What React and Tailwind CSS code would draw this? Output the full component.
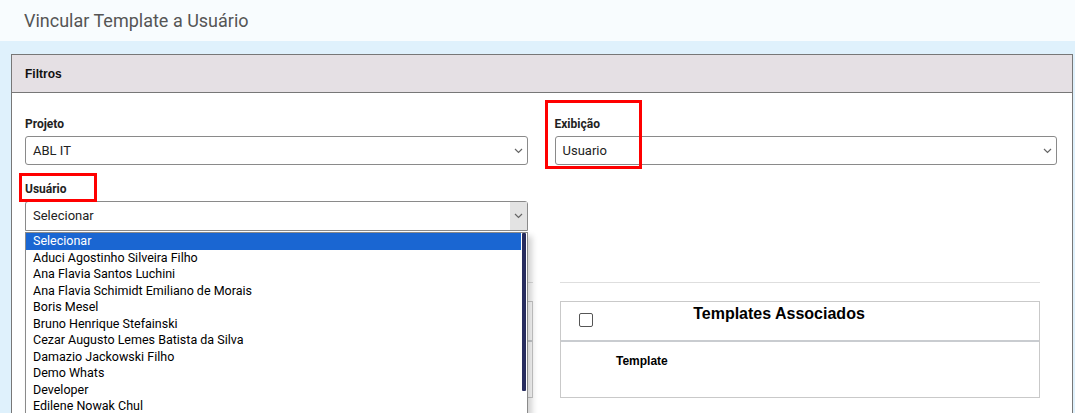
import React from 'react';

const users = [
  'Aduci Agostinho Silveira Filho',
  'Ana Flavia Santos Luchini',
  'Ana Flavia Schimidt Emiliano de Morais',
  'Boris Mesel',
  'Bruno Henrique Stefainski',
  'Cezar Augusto Lemes Batista da Silva',
  'Damazio Jackowski Filho',
  'Demo Whats',
  'Developer',
  'Edilene Nowak Chul',
  'Eduardo Martins',
];

const Chevron = () => (
  <svg width="9" height="6" viewBox="0 0 9 6" className="shrink-0">
    <path d="M1 1l3.5 3.5L8 1" fill="none" stroke="#666" strokeWidth="1.2" />
  </svg>
);

const Select = ({ value, open }) => (
  <div
    className={`flex h-[29px] items-center rounded-[3px] border border-[#8a8a8a] bg-white text-[13px] text-[#222] ${open ? 'h-[30px] rounded-b-none' : ''}`}
  >
    <span className="flex-1 pl-[7px]">{value}</span>
    <span className={`flex h-full w-[17px] items-center justify-center ${open ? 'bg-[#e3e3e3]' : ''}`}>
      <Chevron />
    </span>
  </div>
);

const Label = ({ children }) => (
  <div className="mb-[5px] text-[12px] font-bold leading-[14px] text-[#222]">{children}</div>
);

const TemplatesTable = ({ title }) => (
  <div className="h-[97px] border border-[#c9c9c9]">
    <div className="relative flex h-[40px] justify-center border-b-2 border-[#c9ccd0] pr-[42px]">
      <span className="absolute left-[18px] top-[11px] h-[14px] w-[14px] rounded-[2px] border border-[#555] bg-white" />
      <span className="font-['Liberation_Sans',Arial,sans-serif] text-[16px] font-bold leading-[24px] text-black">{title}</span>
    </div>
    <div className="pl-[55px] pt-[10px] font-['Liberation_Sans',Arial,sans-serif] text-[12px] font-bold text-black">
      Template
    </div>
  </div>
);

export default function App() {
  return (
    <div className="h-[413px] overflow-hidden bg-[#dff1fc] font-['Roboto',Arial,sans-serif]">
      <div className="flex h-[41px] items-center bg-[#f8fcfe] pl-[24px] text-[18px] text-[#555]">
        Vincular Template a Usuário
      </div>
      <div className="ml-[11px] mr-[2px] mt-[13px] h-[400px] border border-[#777] bg-white">
        <div className="relative flex h-[38px] items-center border-b border-[#777] bg-[#e5e0e4] pl-[13px] font-['Liberation_Sans',Arial,sans-serif] text-[12px] font-bold text-[#111]">
          Filtros
        </div>
        <div className="relative pl-[13px] pr-[15px] pt-[24px]">
          <div className="grid grid-cols-2 gap-x-[27px]">
            <div>
              <Label>Projeto</Label>
              <Select value="ABL IT" />
              <div className="mt-[17px]">
                <Label>Usuário</Label>
                <div className="relative">
                  <Select value="Selecionar" open />
                  <div className="absolute left-0 top-[31px] z-20 h-[200px] w-[503px] border border-[#8a8a8a] bg-white text-[12.5px] leading-[16.5px] text-black shadow-[4px_4px_6px_rgba(0,0,0,0.18)]">
                    <div className="mr-[6px] bg-[#1a66d2] pl-[7px] text-white">Selecionar</div>
                    {users.map((u) => (
                      <div key={u} className="pl-[7px]">{u}</div>
                    ))}
                    <div className="absolute right-[1px] top-0 h-[158px] w-[4px] rounded-[1px] bg-[#272c5e]" />
                  </div>
                </div>
              </div>
            </div>
            <div>
              <Label>Exibição</Label>
              <Select value="Usuario" />
            </div>
          </div>
          <div className="mt-[51px] flex">
            <div className="ml-[15px] w-[493px]">
              <div className="h-px bg-[#dedede]" />
              <div className="mt-[18px]">
                <TemplatesTable title="Templates Disponíveis" />
              </div>
            </div>
            <div className="ml-[27px] w-[480px]">
              <div className="h-px bg-[#dedede]" />
              <div className="mt-[18px]">
                <TemplatesTable title="Templates Associados" />
              </div>
            </div>
          </div>
          <div className="pointer-events-none absolute left-[7px] top-[80px] h-[29px] w-[78px] border-[3px] border-[#f00]" />
          <div className="pointer-events-none absolute left-[533px] top-[7px] h-[69px] w-[97px] border-[3px] border-[#f00]" />
        </div>
      </div>
    </div>
  );
}
